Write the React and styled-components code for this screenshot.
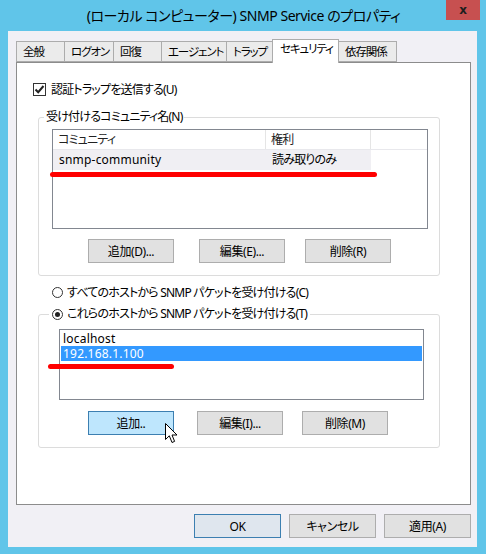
import React from "react";
import styled, { createGlobalStyle } from "styled-components";

const GlobalStyle = createGlobalStyle`
    * { box-sizing: border-box; }
    body {
        margin: 0;
        background: #60c5e9;
        font-family: "Noto Sans", "Noto Sans CJK JP", sans-serif;
        font-feature-settings: "palt";
        font-size: 12px;
        letter-spacing: -0.8px;
        color: #000;
    }
`

const Window = styled.div`
    position: relative;
    width: 486px;
    height: 554px;
    display: flex;
    flex-direction: column;
    padding: 0 9px 7px 8px;
    background: #60c5e9;
`

const TitleBar = styled.div`
    height: 31px;
    display: flex;
    align-items: center;
    justify-content: center;
    font-size: 14px;
    letter-spacing: -0.45px;
    padding: 0 0 1px 2px;
`

const CloseButton = styled.div`
    position: absolute;
    top: 0;
    right: 6px;
    width: 34px;
    height: 20px;
    background: #c75050;
    display: flex;
    align-items: center;
    justify-content: center;
    font-family: "DejaVu Sans", sans-serif;
    font-weight: bold;
    font-size: 12px;
    letter-spacing: 0;
    color: #1e1e1e;
`

const Client = styled.div`
    flex: 1;
    display: flex;
    flex-direction: column;
    padding: 8px 6px 0 8px;
    background: #f1f0f5;
`

const TabStrip = styled.div`
    height: 23px;
    display: flex;
    align-items: flex-end;
    padding-left: 1px;
`

const Tab = styled.div`
    position: relative;
    width: ${p => p.$w}px;
    height: ${p => (p.$active ? 24 : 21)}px;
    margin-left: -1px;
    margin-bottom: ${p => (p.$active ? -1 : 0)}px;
    z-index: ${p => (p.$active ? 1 : 0)};
    padding-left: ${p => (p.$active ? 7 : 6)}px;
    border: 1px solid #acacac;
    border-bottom: ${p => (p.$active ? "none" : "1px solid #acacac")};
    background: ${p => (p.$active ? "#fff" : "#ebebeb")};
    font-size: 11.5px;
    line-height: ${p => (p.$active ? 18 : 19)}px;
    letter-spacing: -1.1px;
    white-space: nowrap;
    overflow: hidden;
`

const Panel = styled.div`
    height: 443px;
    display: flex;
    flex-direction: column;
    align-items: flex-start;
    padding-left: 16px;
    border: 1px solid #8c8c8c;
    background: #fff;
`

const CheckRow = styled.div`
    height: 16px;
    margin-top: 18px;
    display: flex;
    align-items: center;
    gap: 5px;
`

const CheckBox = styled.div`
    width: 13px;
    height: 13px;
    border: 1px solid #333;
    background: #fff;
    display: flex;
    align-items: center;
    justify-content: center;
`

const Group = styled.fieldset`
    width: 402px;
    min-width: 0;
    margin: ${p => p.$mt}px 0 0 5px;
    padding: ${p => p.$pt}px 0 12px 0;
    border: 1px solid #dcdcdc;
    border-radius: 3px;
`

const Legend = styled.legend`
    margin-left: ${p => p.$ml}px;
    padding: 0 ${p => p.$px}px;
    line-height: 16px;
    display: flex;
    align-items: center;
    gap: 4px;
`

const ListView = styled.div`
    width: 376px;
    height: 100px;
    margin-left: 13px;
    border: 1px solid #828790;
    background: #fff;
`

const HeaderRow = styled.div`
    display: flex;
    height: 20px;
    border-bottom: 1px solid #e8e8ec;
`

const HeaderCell = styled.div`
    width: ${p => p.$w}px;
    padding-left: 5px;
    border-right: 1px solid #e5e5e5;
    line-height: 19px;
    color: #222;
`

const DataRow = styled.div`
    display: flex;
    width: 318px;
    height: 20px;
    background: #f0eff3;
`

const DataCell = styled.div`
    width: ${p => p.$w}px;
    padding-left: 6px;
    line-height: 20px;
    letter-spacing: ${p => (p.$latin ? "0.2px" : "inherit")};
`

const ButtonRow = styled.div`
    display: flex;
    margin: ${p => p.$mt}px 0 0 49px;
`

const Button = styled.div`
    position: relative;
    width: ${p => p.$w || 86}px;
    height: 24px;
    margin-left: ${p => p.$ml || 0}px;
    display: flex;
    align-items: center;
    justify-content: center;
    border: 1px solid ${p => (p.$hot || p.$default ? "#3c7fb1" : "#adadad")};
    background: ${p => (p.$hot ? "#bee6fd" : p.$default ? "#dfe6ee" : "#e1e1e1")};
    letter-spacing: -0.4px;
    white-space: nowrap;
`

const RadioRow = styled.div`
    height: 16px;
    margin: 8px 0 0 19px;
    display: flex;
    align-items: center;
    gap: 4px;
`

const Radio = styled.div`
    width: 11px;
    height: 11px;
    border-radius: 50%;
    border: 1px solid #333;
    background: #fff;
    display: flex;
    align-items: center;
    justify-content: center;

    &::after {
        content: "";
        display: ${p => (p.$checked ? "block" : "none")};
        width: 5px;
        height: 5px;
        border-radius: 50%;
        background: #222;
    }
`

const ListBox = styled.div`
    width: 365px;
    height: 71px;
    margin-left: 20px;
    padding: 1px;
    border: 1px solid #828790;
    background: #fff;
`

const ListItem = styled.div`
    height: 15px;
    line-height: 15px;
    padding-left: 2px;
    overflow: hidden;
    letter-spacing: 0.2px;
    background: ${p => (p.$selected ? "#3399ff" : "transparent")};
    color: ${p => (p.$selected ? "#fff" : "#000")};
`

const BottomBar = styled.div`
    display: flex;
    justify-content: flex-end;
    gap: 8px;
    padding: 9px 0;
`

const RedMark = styled.div`
    position: absolute;
    left: ${p => p.$x}px;
    top: ${p => p.$y}px;
    width: ${p => p.$w}px;
    height: 5px;
    border-radius: 3px;
    background: #ff0000;
`

const Cursor = styled.svg`
    position: absolute;
    left: 76px;
    top: 11px;
`

const tabs = [
    { label: "全般", w: 49 },
    { label: "ログオン", w: 50 },
    { label: "回復", w: 49 },
    { label: "エージェント", w: 66 },
    { label: "トラップ", w: 47 },
    { label: "セキュリティ", w: 67, active: true },
    { label: "依存関係", w: 59 },
];

const App = () => {
    return (
        <Window>
            <GlobalStyle />
            <TitleBar>(ローカル コンピューター) SNMP Service のプロパティ</TitleBar>
            <CloseButton>x</CloseButton>
            <Client>
                <TabStrip>
                    {tabs.map(t => (
                        <Tab key={t.label} $w={t.w} $active={t.active}>{t.label}</Tab>
                    ))}
                </TabStrip>
                <Panel>
                    <CheckRow>
                        <CheckBox>
                            <svg width="11" height="11" viewBox="0 0 11 11">
                                <path d="M1.5 5.5 L4.2 8.2 L9.5 2" fill="none" stroke="#222" strokeWidth="2" />
                            </svg>
                        </CheckBox>
                        <span>認証トラップを送信する(U)</span>
                    </CheckRow>

                    <Group $mt={12} $pt={4}>
                        <Legend $ml={5} $px={2}>受け付けるコミュニティ名(N)</Legend>
                        <ListView>
                            <HeaderRow>
                                <HeaderCell $w={213}>コミュニティ</HeaderCell>
                                <HeaderCell $w={105}>権利</HeaderCell>
                            </HeaderRow>
                            <DataRow>
                                <DataCell $w={213} $latin>snmp-community</DataCell>
                                <DataCell $w={105}>読み取りのみ</DataCell>
                            </DataRow>
                        </ListView>
                        <ButtonRow $mt={10}>
                            <Button>追加(D)...</Button>
                            <Button $ml={25}>編集(E)...</Button>
                            <Button $ml={20}>削除(R)</Button>
                        </ButtonRow>
                    </Group>

                    <RadioRow>
                        <Radio />
                        <span>すべてのホストから SNMP パケットを受け付ける(C)</span>
                    </RadioRow>

                    <Group $mt={6} $pt={7}>
                        <Legend $ml={10} $px={3}>
                            <Radio $checked />
                            <span>これらのホストから SNMP パケットを受け付ける(T)</span>
                        </Legend>
                        <ListBox>
                            <ListItem>localhost</ListItem>
                            <ListItem $selected>192.168.1.100</ListItem>
                        </ListBox>
                        <ButtonRow $mt={11}>
                            <Button $hot>
                                追加..
                                <Cursor width="13" height="21" viewBox="0 0 13 21">
                                    <path d="M0.5 0.5 L0.5 16.5 L4.3 12.8 L7 19.5 L9.6 18.4 L7 12 L12 12 Z" fill="#fff" stroke="#000" strokeWidth="1" />
                                </Cursor>
                            </Button>
                            <Button $ml={23}>編集(I)...</Button>
                            <Button $ml={19}>削除(M)</Button>
                        </ButtonRow>
                    </Group>
                </Panel>
                <BottomBar>
                    <Button $w={87} $default>OK</Button>
                    <Button $w={87}>キャンセル</Button>
                    <Button $w={87}>適用(A)</Button>
                </BottomBar>
            </Client>
            <RedMark $x={50} $y={172} $w={327} />
            <RedMark $x={48} $y={364} $w={126} />
        </Window>
    );
}

export default App;
